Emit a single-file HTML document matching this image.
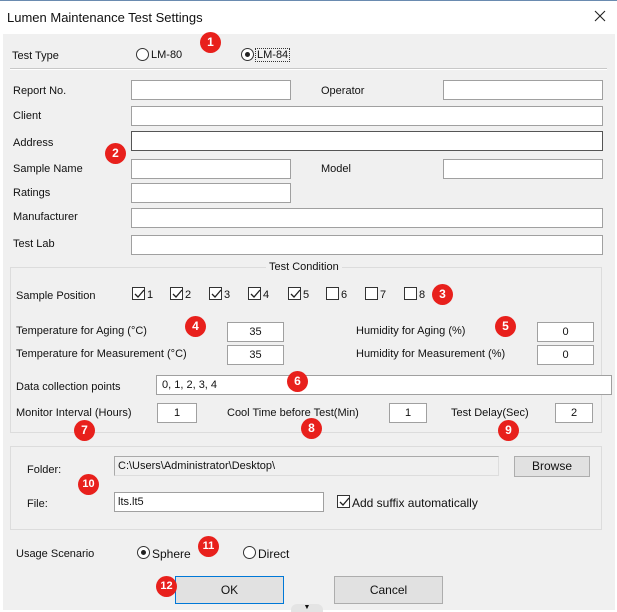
<!DOCTYPE html>
<html><head><style>
*{box-sizing:border-box;margin:0;padding:0}
body{width:617px;height:610px;background:#fff;font-family:"Liberation Sans",sans-serif;font-size:11px;color:#111;position:relative;overflow:hidden}
.a{position:absolute;white-space:nowrap;transform:translateY(2px)}
.body{position:absolute;left:3px;top:34px;width:612px;height:576px;background:#f0f0f0}
.in{position:absolute;background:#fff;border:1px solid #a0a0a0;height:20px;font-size:11px;text-align:center;line-height:18px}
.b{position:absolute;width:21px;height:21px;border-radius:50%;background:#e8201c;color:#fff;font-size:12px;font-weight:bold;text-align:center;line-height:21px}
.cb{position:absolute;width:13px;height:13px;border:1px solid #333;background:#fff}
.cb svg{position:absolute;left:0;top:0}
.rd{position:absolute;width:13px;height:13px;border:1px solid #333;border-radius:50%;background:#fff}
.rd.on::after{content:"";position:absolute;left:3px;top:3px;width:5px;height:5px;border-radius:50%;background:#222}
.grp{position:absolute;border:1px solid #dcdcdc}
.btn{position:absolute;background:#e1e1e1;border:1px solid #adadad;text-align:center;font-size:12px}
</style></head><body>
<div style="position:absolute;left:0;top:0;width:617px;height:1px;background:#6a8bb0"></div>
<div class="a" style="left:7px;top:8px;font-size:13px">Lumen Maintenance Test Settings</div>
<svg style="position:absolute;left:594px;top:10px" width="12" height="12"><path d="M1 1L11 11M11 1L1 11" stroke="#222" stroke-width="1.1"/></svg>
<div class="body"></div>

<div class="a" style="left:12px;top:48px">Test Type</div>
<div class="rd" style="left:136px;top:48px"></div><div class="a" style="left:151px;top:47px">LM-80</div>
<div class="rd on" style="left:241px;top:48px"></div><div class="a" style="left:255px;top:46px;border:1px dotted #333;padding:0 1px">LM-84</div>
<div class="b" style="left:200px;top:32px">1</div>
<div class="a" style="left:10px;top:66px;width:597px;height:2px;border-top:1px solid #c8c8c8;border-bottom:1px solid #fff"></div>

<div class="a" style="left:13px;top:83px">Report No.</div>
<div class="in" style="left:131px;top:80px;width:160px"></div>
<div class="a" style="left:321px;top:83px">Operator</div>
<div class="in" style="left:443px;top:80px;width:160px"></div>
<div class="a" style="left:13px;top:108px">Client</div>
<div class="in" style="left:131px;top:106px;width:472px"></div>
<div class="a" style="left:13px;top:135px">Address</div>
<div class="in" style="left:131px;top:131px;width:472px;border-color:#555"></div>
<div class="b" style="left:105px;top:143px">2</div>
<div class="a" style="left:13px;top:161px">Sample Name</div>
<div class="in" style="left:131px;top:159px;width:160px"></div>
<div class="a" style="left:321px;top:161px">Model</div>
<div class="in" style="left:443px;top:159px;width:160px"></div>
<div class="a" style="left:13px;top:185px">Ratings</div>
<div class="in" style="left:131px;top:183px;width:160px"></div>
<div class="a" style="left:13px;top:209px">Manufacturer</div>
<div class="in" style="left:131px;top:208px;width:472px"></div>
<div class="a" style="left:13px;top:236px">Test Lab</div>
<div class="in" style="left:131px;top:235px;width:472px"></div>

<div class="grp" style="left:10px;top:267px;width:592px;height:166px"></div>
<div class="a" style="left:266px;top:259px;background:#f0f0f0;padding:0 3px">Test Condition</div>
<div class="a" style="left:16px;top:288px">Sample Position</div>
<div class="cb" style="left:132px;top:287px"><svg width="12" height="12"><path d="M2 6l3 3 6-7" stroke="#222" fill="none" stroke-width="1.3"/></svg></div><div class="a" style="left:147px;top:287px">1</div>
<div class="cb" style="left:170px;top:287px"><svg width="12" height="12"><path d="M2 6l3 3 6-7" stroke="#222" fill="none" stroke-width="1.3"/></svg></div><div class="a" style="left:185px;top:287px">2</div>
<div class="cb" style="left:209px;top:287px"><svg width="12" height="12"><path d="M2 6l3 3 6-7" stroke="#222" fill="none" stroke-width="1.3"/></svg></div><div class="a" style="left:224px;top:287px">3</div>
<div class="cb" style="left:248px;top:287px"><svg width="12" height="12"><path d="M2 6l3 3 6-7" stroke="#222" fill="none" stroke-width="1.3"/></svg></div><div class="a" style="left:263px;top:287px">4</div>
<div class="cb" style="left:288px;top:287px"><svg width="12" height="12"><path d="M2 6l3 3 6-7" stroke="#222" fill="none" stroke-width="1.3"/></svg></div><div class="a" style="left:303px;top:287px">5</div>
<div class="cb" style="left:326px;top:287px"></div><div class="a" style="left:341px;top:287px">6</div>
<div class="cb" style="left:365px;top:287px"></div><div class="a" style="left:380px;top:287px">7</div>
<div class="cb" style="left:404px;top:287px"></div><div class="a" style="left:419px;top:287px">8</div>
<div class="b" style="left:432px;top:284px">3</div>

<div class="a" style="left:16px;top:323px">Temperature for Aging (°C)</div>
<div class="b" style="left:185px;top:316px">4</div>
<div class="in" style="left:227px;top:322px;width:57px">35</div>
<div class="a" style="left:356px;top:323px">Humidity for Aging (%)</div>
<div class="b" style="left:495px;top:316px">5</div>
<div class="in" style="left:537px;top:322px;width:57px">0</div>
<div class="a" style="left:16px;top:346px">Temperature for Measurement (°C)</div>
<div class="in" style="left:227px;top:345px;width:57px">35</div>
<div class="a" style="left:356px;top:346px">Humidity for Measurement (%)</div>
<div class="in" style="left:537px;top:345px;width:57px">0</div>

<div class="a" style="left:16px;top:379px">Data collection points</div>
<div class="in" style="left:156px;top:375px;width:456px;text-align:left;padding-left:5px">0, 1, 2, 3, 4</div>
<div class="b" style="left:287px;top:371px">6</div>

<div class="a" style="left:16px;top:405px">Monitor Interval (Hours)</div>
<div class="in" style="left:157px;top:403px;width:40px">1</div>
<div class="b" style="left:74px;top:420px">7</div>
<div class="a" style="left:227px;top:405px">Cool Time before Test(Min)</div>
<div class="in" style="left:389px;top:403px;width:38px">1</div>
<div class="b" style="left:301px;top:418px">8</div>
<div class="a" style="left:451px;top:405px">Test Delay(Sec)</div>
<div class="in" style="left:555px;top:403px;width:38px">2</div>
<div class="b" style="left:498px;top:420px">9</div>

<div class="grp" style="left:10px;top:446px;width:592px;height:84px"></div>
<div class="a" style="left:27px;top:462px">Folder:</div>
<div class="in" style="left:114px;top:456px;width:385px;background:#f0f0f0;border-color:#aaa #ddd #ddd #aaa;text-align:left;padding-left:3px">C:\Users\Administrator\Desktop\</div>
<div class="btn" style="left:514px;top:456px;width:76px;height:21px;line-height:19px">Browse</div>
<div class="b" style="left:78px;top:474px;font-size:11px">10</div>
<div class="a" style="left:27px;top:496px">File:</div>
<div class="in" style="left:114px;top:492px;width:210px;text-align:left;padding-left:3px">lts.lt5</div>
<div class="cb" style="left:337px;top:495px"><svg width="12" height="12"><path d="M2 6l3 3 6-7" stroke="#222" fill="none" stroke-width="1.3"/></svg></div>
<div class="a" style="left:352px;top:494px;font-size:12px">Add suffix automatically</div>

<div class="a" style="left:16px;top:546px">Usage Scenario</div>
<div class="rd on" style="left:137px;top:546px"></div><div class="a" style="left:152px;top:545px;font-size:12px">Sphere</div>
<div class="b" style="left:198px;top:536px;font-size:11px">11</div>
<div class="rd" style="left:243px;top:546px"></div><div class="a" style="left:258px;top:545px;font-size:12px">Direct</div>

<div class="btn" style="left:175px;top:576px;width:109px;height:28px;line-height:26px;border-color:#0078d7">OK</div>
<div class="b" style="left:156px;top:576px;font-size:11px">12</div>
<div class="btn" style="left:334px;top:576px;width:109px;height:28px;line-height:26px">Cancel</div>
<div style="position:absolute;left:291px;top:604px;width:32px;height:8px;border-radius:6px 6px 0 0;background:#e4e4e4;font-size:7px;text-align:center;line-height:8px">▼</div>
</body></html>
